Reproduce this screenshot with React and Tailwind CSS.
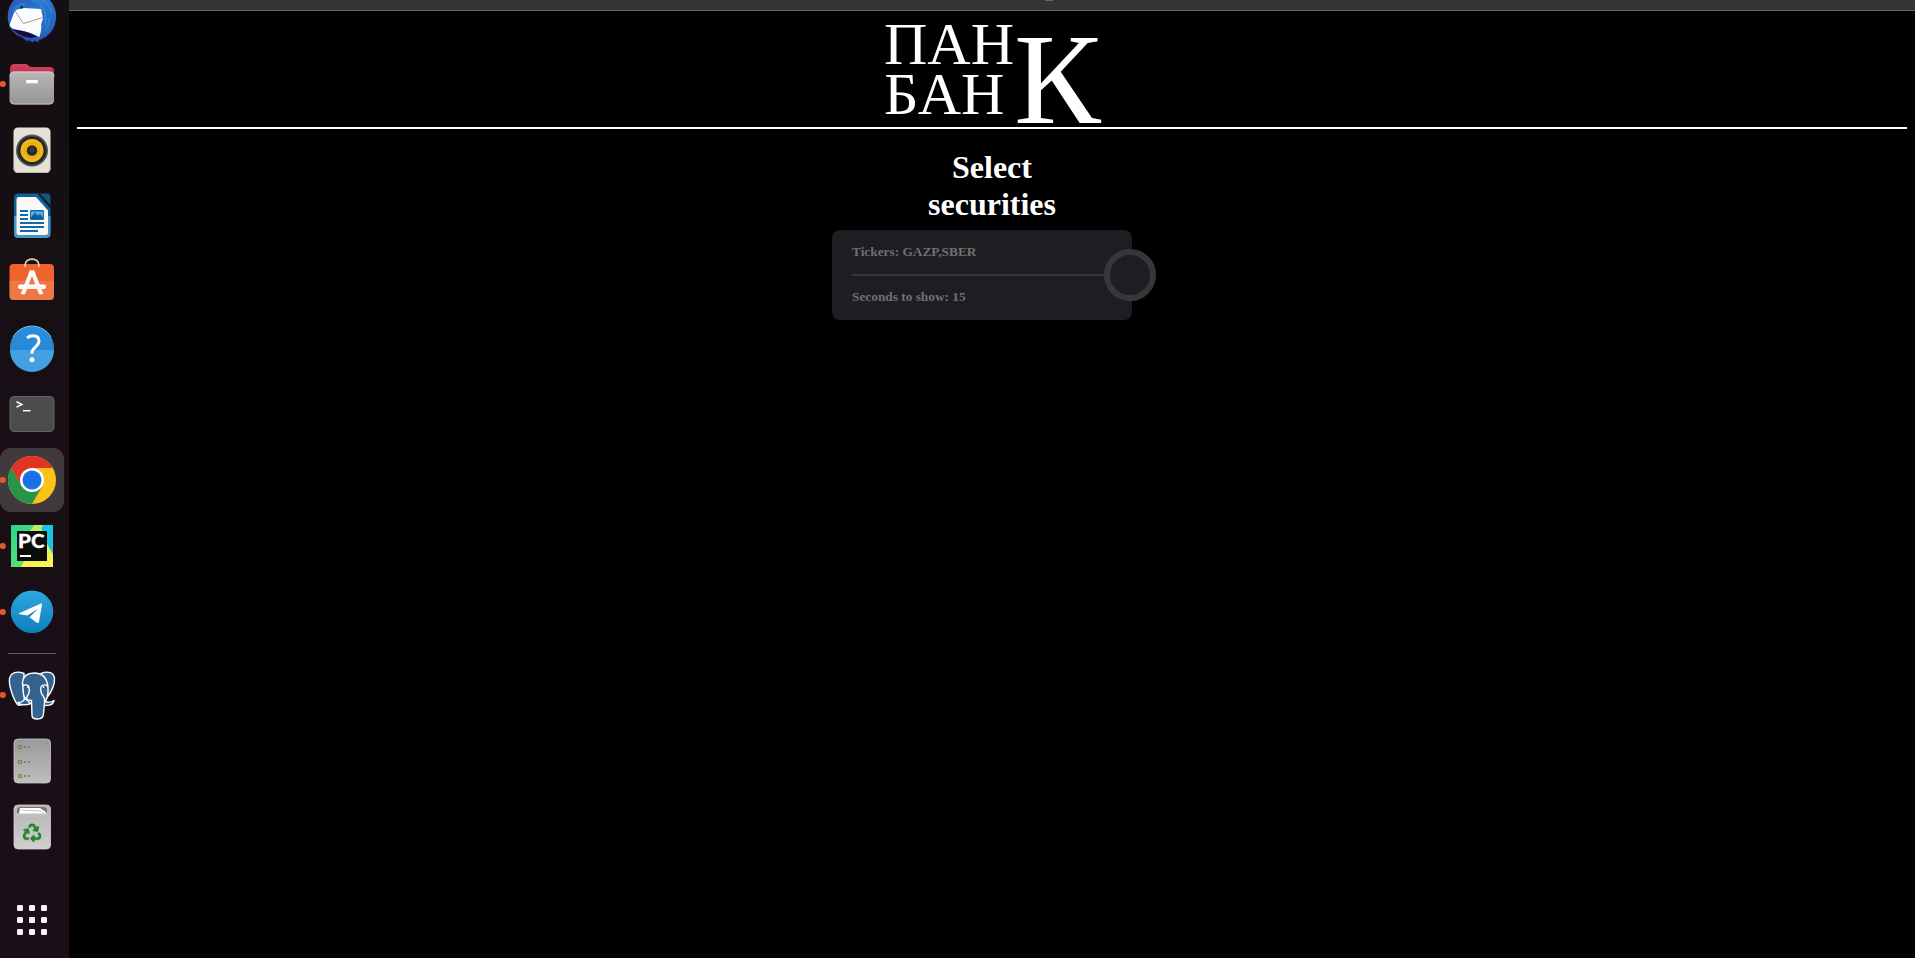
import React from "react";
import { FaRecycle } from "react-icons/fa";

const SLOT = 66;

// Each launcher draws in dock coordinates; `top` is where its slot begins.
function Launcher({ top, running, label, height = SLOT, children }) {
  return (
    <svg
      role="img"
      aria-label={label}
      className="block shrink-0"
      width="69"
      height={height}
      viewBox={`0 ${top} 69 ${height}`}
    >
      {children}
      {running && <circle cx="2.8" cy={top + 33} r="3.1" fill="#e2572c" />}
    </svg>
  );
}

function Gradient({ id, from, to }) {
  return (
    <linearGradient id={id} x1="0" y1="0" x2="0" y2="1">
      <stop offset="0" stopColor={from} />
      <stop offset="1" stopColor={to} />
    </linearGradient>
  );
}

function Mail() {
  return (
    <Launcher top={-15} label="Mail">
      <defs>
        <linearGradient id="bird" x1="0.1" y1="0" x2="0.8" y2="1">
          <stop offset="0" stopColor="#3450b8" />
          <stop offset="0.45" stopColor="#2474cd" />
          <stop offset="1" stopColor="#2b52b4" />
        </linearGradient>
        <linearGradient id="wing" x1="0" y1="0" x2="1" y2="1">
          <stop offset="0" stopColor="#2a8ad8" />
          <stop offset="1" stopColor="#245fbd" />
        </linearGradient>
      </defs>
      <path d="M14 0C9 5 7 13 8 20c1 9 8 16 14 17l6 5-1-3 6 3.500 1-2 5 2-1-2c11-3 18-12 18-24C56 7 50-2 42-7H22Z" fill="url(#bird)" />
      <path d="m15 10-4 11c-2 4-1.500 6 .5 8 10 1 18 3 28 8l2.500-10.500 1-9L41 9 24 8Z" fill="#fcfcfc" />
      <path d="M15 11 23.500 23.500 43 17.500" fill="none" stroke="#85818a" strokeWidth="0.800" />
      <path d="M9 25c2 3 4 4.500 8 5 8 1 14 3 20 7l-7 1C21 37 12 33 9 25Z" fill="#130d3c" />
      <path d="M9 25c2 6 7 10 14 12 2 2 4 3 6 4l-1-3c2 2 4 3 6 3l-1-2 6 2-1-2.500c-4 0-8-.5-12-1.500-7-2-13-6-17-12Z" fill="#344cba" />
      <path d="M28-4c3 7 16 9 16 18 0 6-4 9-2.500 13-.5 4-1 6 .5 9.500 9-4 14-11.500 14-20.500C56 6 49-3 40-7Z" fill="url(#wing)" />
      <path d="M38-3c8 5 13 10 14 17M40 5c5 5 7 11 5 20M49 18c0 6-1 9-4 12" fill="none" stroke="#4c9be4" strokeWidth="0.700" />
      <path d="M14 9c2-5 6-6 12-6-2 3-3 5-8 5.500L14 12Z" fill="#2783c9" />
      <circle cx="21.500" cy="7" r="1.600" fill="#0e2c58" />
    </Launcher>
  );
}

function Files() {
  return (
    <Launcher top={51} running label="Files">
      <defs>
        <Gradient id="folderBack" from="#d4435f" to="#a9213e" />
        <Gradient id="folderFront" from="#b8b8b8" to="#949494" />
      </defs>
      <path d="M10 69q0-5 5-5h10q2 0 3 1l1 1q1 1 3 1h18q4 0 4 4v12H10Z" fill="url(#folderBack)" />
      <rect x="9.5" y="71.5" width="44.5" height="33" rx="4.5" fill="url(#folderFront)" />
      <path d="M10 76.5q0-4.5 4.5-4.5h35q4.500 0 4.500 4.500" fill="none" stroke="#d9cccc" strokeWidth="0.9" />
      <path d="M10.500 100q.5 4 4.500 4h34.500q4 0 4-4" fill="none" stroke="#c8c8c8" strokeWidth="0.8" />
      <rect x="26" y="80" width="12" height="3.3" rx="1" fill="#fff" />
    </Launcher>
  );
}

function Music() {
  return (
    <Launcher top={117} label="Music">
      <rect x="13.500" y="127.500" width="37" height="45.500" rx="4.500" fill="#e6e1d5" />
      <path d="M14 168q0 4.500 4 4.500h28q4 0 4-4.500" fill="none" stroke="#bdb8aa" />
      <circle cx="32" cy="150.500" r="16" fill="#4d5458" />
      <circle cx="32" cy="150.500" r="14.300" fill="#25282a" />
      <circle cx="32" cy="150.500" r="11.500" fill="#f0b916" />
      <circle cx="32" cy="150.500" r="7.500" fill="none" stroke="#d69b10" strokeWidth="0.8" />
      <circle cx="32" cy="150.500" r="5.300" fill="#292b2b" />
      <circle cx="32" cy="150" r="2.500" fill="#36393a" />
    </Launcher>
  );
}

function Writer() {
  return (
    <Launcher top={183} label="Writer">
      <path d="M18 193.500h22l10.500 12v28q0 4.500-4.500 4.500H18q-4 0-4-4.500V198q0-4.500 4-4.500Z" fill="#0f6097" />
      <path d="M14 216h36.500v17.500q0 4.500-4.500 4.500H18q-4 0-4-4.500Z" fill="#4398c5" />
      <path d="M39.500 193.500H47q3.500 0 3.500 3.500v9Z" fill="#13577f" />
      <path d="M38.500 193.500 51 207.500" stroke="#0c1c28" strokeWidth="2" />
      <path d="M18.500 197H36l12 13.500v22q0 2.500-2.500 2.500h-27q-2 0-2-2.500v-33q0-2.500 2-2.500Z" fill="#fafafa" />
      <path d="M20 211h8m-8 4h8m-8 4h8m-8 4h24m-24 4h24m-24 4h18" fill="none" stroke="#126ba6" strokeWidth="1.800" />
      <rect x="30" y="210" width="14" height="10" rx="1" fill="#126ba6" />
      <path d="M31 211.500h12v6l-3-4-2 2-3-3-4 5Z" fill="#5bb1df" />
      <path d="M31.500 219v-2l3-3 4 4 2-2 2.500 3Z" fill="#0c5d94" />
    </Launcher>
  );
}

function Store() {
  return (
    <Launcher top={249} label="Software">
      <defs>
        <Gradient id="bag" from="#f0622a" to="#ed6a34" />
      </defs>
      <rect x="9.500" y="264" width="44.500" height="36" rx="4" fill="url(#bag)" />
      <path d="M9.500 281h44.500v15q0 4-4 4H13.500q-4 0-4-4Z" fill="#f08b5c" opacity="0.450" />
      <path d="M25 266.500v-1c0-8.500 14-8.500 14 0v1" fill="none" stroke="#f2dfb6" strokeWidth="1.600" strokeLinecap="round" />
      <path d="M30 270.500h4l9 23.500h-3.700L32 275.500l-7.300 18.500H21Z" fill="#fff" stroke="#fff" strokeWidth="0.500" />
      <rect x="18" y="284.500" width="28" height="4.500" rx="2.200" fill="#fff" />
      <path d="M27 287h15" stroke="#f5d9ca" strokeWidth="0.700" />
    </Launcher>
  );
}

function Help() {
  return (
    <Launcher top={315} label="Help">
      <defs>
        <Gradient id="helpTop" from="#2b90dd" to="#2580cf" />
      </defs>
      <circle cx="32" cy="348" r="22" fill="url(#helpTop)" />
      <path d="M10 350a22 22 0 0 0 44 0Z" fill="#43a0e2" />
      <path d="M13 337a22 22 0 0 1 38 0" fill="none" stroke="#7abff0" strokeWidth="1" />
      <path d="M27 337.700q3-2 6-2c4 0 6 2.200 6 5.400 0 5.400-7 6.400-7 11.200v1.500" fill="none" stroke="#fff" strokeWidth="3" />
      <circle cx="32" cy="359.700" r="2.500" fill="#fff" />
    </Launcher>
  );
}

function Terminal() {
  return (
    <Launcher top={381} label="Terminal">
      <rect x="10" y="396.500" width="44" height="35" rx="4" fill="#4c4c4c" stroke="#656565" strokeWidth="1" />
      <path d="m16.500 401.700 5.300 2.700-5.300 2.700" fill="none" stroke="#fff" strokeWidth="1.600" />
      <path d="M23 410.700h7.500" stroke="#fff" strokeWidth="1.500" />
    </Launcher>
  );
}

function Chrome() {
  return (
    <Launcher top={447} running label="Chrome">
      <rect x="0" y="448" width="64" height="64" rx="11" fill="#403a3f" />
      <circle cx="32" cy="480" r="24" fill="#fbc117" />
      <path d="M32 468H52.800A24 24 0 0 0 11.200 468L21.600 486Z" fill="#df3426" />
      <path d="M11.200 468A24 24 0 0 0 32 504L42.400 486 21.600 486Z" fill="#279447" />
      <circle cx="32" cy="480" r="12" fill="#fff" />
      <circle cx="32" cy="480" r="9.500" fill="#1b70e6" />
    </Launcher>
  );
}

function PyCharm() {
  return (
    <Launcher top={513} running label="PyCharm">
      <defs>
        <linearGradient id="pyGreen" x1="0" y1="0" x2="1" y2="1">
          <stop offset="0" stopColor="#24d78a" />
          <stop offset="1" stopColor="#82e56c" />
        </linearGradient>
        <linearGradient id="pyYellow" x1="0" y1="0" x2="0" y2="1">
          <stop offset="0" stopColor="#bff066" />
          <stop offset="1" stopColor="#fcf456" />
        </linearGradient>
      </defs>
      <rect x="11" y="525" width="42" height="42" fill="url(#pyGreen)" />
      <path d="M34 525h10l9 29v13H21l4-8Z" fill="url(#pyYellow)" />
      <path d="M40 525h13v29l-6-10Z" fill="#18c5e5" />
      <path d="M35 525h8l-3 7H29Z" fill="#c2ec62" />
      <rect x="17" y="531" width="30" height="30" fill="#0b0b0b" />
      <text x="18" y="548" fill="#fff" stroke="#fff" strokeWidth="0.300" fontSize="19" fontWeight="900" textLength="26.500" lengthAdjust="spacingAndGlyphs" fontFamily="Lato, sans-serif">PC</text>
      <rect x="20" y="555" width="11" height="2" fill="#fff" />
    </Launcher>
  );
}

function Telegram() {
  return (
    <Launcher top={579} running label="Telegram">
      <defs>
        <Gradient id="plane" from="#30a8df" to="#0d7fbe" />
      </defs>
      <circle cx="32" cy="611.700" r="21.300" fill="url(#plane)" />
      <path d="M19 613.300 41 603.600q1.300-.4 1 1.200l-3 17q-.5 2-2.200.9l-7.300-5.400 9-8.800-11.200 7-7.500-1.300q-2-.4-.8-.900Z" fill="#fff" />
    </Launcher>
  );
}

function Postgres() {
  return (
    <Launcher top={662} running label="PostgreSQL">
      <g transform="translate(0 .5)">
        <g fill="#33648f" stroke="#fff" strokeWidth="1.400" strokeLinejoin="round" strokeLinecap="round">
          <path d="M41 673c7-3 13-1 13.500 5 .5 5-2.500 13-7.500 19l-2 4c3 1 6 1 9-1-1 5-6 5-10 5Z" />
          <path d="M24 673c-7-3-13-1-14.500 5-1 7 4 21 8 26 2 2 4 0 7-4l-1-9Z" />
          <path d="M25 698c-2 4-5 4-7 4 2 3 8 3 13 1Z" />
          <path d="M34 672.500c-8 0-11 4-11.500 9.500l1 12c1 4 4 6 8 6l.5 15c0 2.500 3 3.500 5.500 3.500 4 0 6-2.500 6-5.500l1-11c3-4 4-8 3.500-14-.5-10-5-15.500-14-15.500Z" />
          <path d="M23 685c5-2 7 1 6 7-1 4-3 3-2 7" fill="none" />
          <path d="M47.500 685c-6-2-8 1-6 8 2 4 4 4 3 8" fill="none" />
        </g>
        <circle cx="28" cy="686.500" r="0.900" fill="#fff" />
        <circle cx="43.500" cy="686.500" r="0.900" fill="#fff" />
      </g>
    </Launcher>
  );
}

function Disks() {
  return (
    <Launcher top={728} label="Disks">
      <defs>
        <Gradient id="diskBody" from="#999" to="#bebebe" />
      </defs>
      <rect x="14" y="739" width="36.500" height="44" rx="4" fill="url(#diskBody)" stroke="#c7c7c7" strokeWidth="0.800" />
      {[747, 762, 776].map((y) => (
        <g key={y}>
          <circle cx="20" cy={y} r="1.700" fill="none" stroke="#718444" strokeWidth="1.200" />
          <circle cx="25" cy={y} r="1" fill="#707070" />
          <circle cx="29" cy={y} r="1" fill="#707070" />
        </g>
      ))}
    </Launcher>
  );
}

function Trash() {
  return (
    <Launcher top={794} label="Trash">
      <defs>
        <Gradient id="binBody" from="#b4b4b4" to="#d0d0d0" />
      </defs>
      <rect x="14" y="805" width="36.500" height="44" rx="4" fill="url(#binBody)" stroke="#d0d0d0" strokeWidth="0.800" />
      <path d="M17 813v-2q0-4 4-4h22q4 0 4 4v2Z" fill="#747474" />
      <path d="m19 814 1-6 20 0 6 4v2Z" fill="#fff" />
      <path d="m21 810 19 1 4 2" fill="none" stroke="#b0b0b0" strokeWidth="0.700" />
      <rect x="16" y="813.500" width="32.500" height="3" fill="#c0c0c0" />
      <FaRecycle x="22.800" y="823.500" size="18.500" color="#26862b" stroke="#26862b" strokeWidth="14" />
    </Launcher>
  );
}

function AppGrid() {
  return (
    <Launcher top={887} label="Show applications">
      {[908, 920, 932].map((y) =>
        [20, 32, 44].map((x) => (
          <rect key={`${x}-${y}`} x={x - 3} y={y - 3} width="6" height="6" rx="1.300" fill="#f5f2f4" />
        ))
      )}
    </Launcher>
  );
}

function Dock() {
  return (
    <aside className="flex w-[69px] shrink-0 flex-col overflow-hidden bg-linear-to-b from-[#140f13] to-[#1b0f17]">
      <div className="-mt-[15px] flex flex-col">
        <Mail />
        <Files />
        <Music />
        <Writer />
        <Store />
        <Help />
        <Terminal />
        <Chrome />
        <PyCharm />
        <Telegram />
        <div className="flex h-[17px] items-center pl-2">
          <div className="h-px w-12 bg-[#625b60]" />
        </div>
        <Postgres />
        <Disks />
        <Trash />
      </div>
      <div className="mt-auto mb-[5px]">
        <AppGrid />
      </div>
    </aside>
  );
}

function Header() {
  return (
    <header className="flex h-[110px] justify-center border-b-2 border-white pl-px">
      <div className="flex">
        <div className="w-[130px] text-[60px] leading-[50px]">
          <div>ПАН</div>
          <div>БАН</div>
        </div>
        <div className="w-[87px] pt-[10px] text-[130px] leading-[100px]">К</div>
      </div>
    </header>
  );
}

function SecuritiesForm() {
  return (
    <form className="mt-[7px] flex h-[90px] w-[300px] items-center rounded-lg bg-[#1d1e22] pl-5 text-[13.333px] font-bold text-[#6f6f6f]">
      <div className="w-[252px] shrink-0">
        <div className="flex h-[44px] items-center">Tickers: GAZP,SBER</div>
        <div className="h-[2px] bg-[#35373b]" />
        <div className="flex h-[44px] items-center pb-[2px]">Seconds to show: 15</div>
      </div>
      <button
        type="button"
        aria-label="Show"
        className="size-[52px] shrink-0 rounded-full border-[6px] border-[#35373b] bg-[#1d1e22]"
      />
    </form>
  );
}

export default function App() {
  return (
    <div className="flex h-screen w-full overflow-hidden bg-black font-['Liberation_Serif',serif] text-white">
      <Dock />
      <div className="flex min-w-0 flex-1 flex-col">
        <div className="flex h-[11px] shrink-0 justify-center border-b border-[#666] bg-[#353535]">
          <div className="ml-[114px] h-px w-2 bg-[#686868]" />
        </div>
        <main className="mx-2 mt-2">
          <Header />
          <section className="ml-[755px] flex w-[300px] flex-col pt-5">
            <h1 className="ml-[60px] w-[200px] px-8 text-center text-[32px] leading-[37px] font-bold">
              Select securities
            </h1>
            <SecuritiesForm />
          </section>
        </main>
      </div>
    </div>
  );
}
